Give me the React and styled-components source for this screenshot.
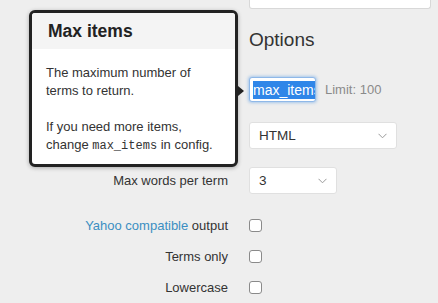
import React from "react";
import styled, { createGlobalStyle } from "styled-components";

const GlobalStyle = createGlobalStyle`
  body {
    margin: 0;
    background: #eeeeee;
    font-family: "Liberation Sans", Arial, sans-serif;
    color: #333;
  }
`;

const Page = styled.div`
  position: relative;
  width: 438px;
  height: 303px;
  overflow: hidden;
  padding-left: 8px;
  box-sizing: border-box;
`;

const Row = styled.div`
  display: grid;
  grid-template-columns: 220px 1fr;
  column-gap: 21px;
  align-items: center;
  margin-top: ${(p) => p.$mt || 0}px;
  min-height: ${(p) => p.$h || 0}px;
`;

const Label = styled.div`
  text-align: right;
  font-size: 13px;
  color: #333;
  white-space: nowrap;
`;

const Link = styled.span`
  color: #3b8ec2;
`;

const TextArea = styled.div`
  width: 180px;
  height: 8px;
  background: #fff;
  border: 1px solid #d8d8d8;
  border-top: none;
  border-radius: 0 0 3px 3px;
`;

const Heading = styled.h2`
  margin: 0;
  font-weight: normal;
  font-size: 19px;
  line-height: 22px;
  color: #333;
`;

const Controls = styled.div`
  display: flex;
  align-items: center;
  gap: 9px;
`;

const FakeInput = styled.div`
  width: 67px;
  height: 25px;
  box-sizing: border-box;
  background: #fff;
  border: 1px solid #8fb8e8;
  border-radius: 3px;
  box-shadow: 0 0 3px 1px rgba(80, 150, 230, 0.45);
  overflow: hidden;
  display: flex;
  align-items: center;
  padding-left: 3px;
  font-size: 14px;
  white-space: nowrap;
`;

const Selected = styled.span`
  background: #2f86e8;
  color: #fff;
  line-height: 18px;
`;

const Hint = styled.span`
  font-size: 13px;
  color: #8a8a8a;
`;

const Select = styled.div`
  width: ${(p) => p.$w}px;
  height: 27px;
  box-sizing: border-box;
  background: #fff;
  border: 1px solid #e0e0e0;
  border-radius: 3px;
  display: flex;
  align-items: center;
  justify-content: space-between;
  padding: 0 9px 0 9px;
  font-size: 13.5px;
  color: #333;
`;

const Check = styled.span`
  display: block;
  width: 13px;
  height: 13px;
  box-sizing: border-box;
  background: #fff;
  border: 1px solid #8a8a8a;
  border-radius: 3px;
`;

const Popover = styled.div`
  position: absolute;
  left: 29px;
  top: 10px;
  width: 209px;
  height: 157px;
  box-sizing: border-box;
  background: #fff;
  border: 3px solid #222;
  border-radius: 6px;
  box-shadow: 0 1px 4px rgba(0, 0, 0, 0.3);

  &::after {
    content: "";
    position: absolute;
    left: 100%;
    top: 73px;
    margin-left: 3px;
    border-left: 6px solid #222;
    border-top: 5px solid transparent;
    border-bottom: 5px solid transparent;
  }
`;

const PopHeader = styled.div`
  height: 36px;
  background: #f4f4f4;
  border-radius: 3px 3px 0 0;
  display: flex;
  align-items: center;
  padding-left: 16px;
  font-weight: bold;
  font-size: 17.5px;
  color: #222;
`;

const PopBody = styled.div`
  padding: 15px 14px 0 14px;
  font-size: 13px;
  line-height: 18px;
  color: #333;
`;

const Code = styled.code`
  font-family: "Liberation Mono", "DejaVu Sans Mono", monospace;
  font-size: 12px;
`;

const Chevron = () => (
  <svg width="9" height="6" viewBox="0 0 9 6">
    <path d="M0.5 0.8 L4.5 4.8 L8.5 0.8" fill="none" stroke="#999" strokeWidth="1" />
  </svg>
);

export default function App() {
  return (
    <>
      <GlobalStyle />
      <Page>
        <Row>
          <span />
          <TextArea />
        </Row>
        <Row $mt={20}>
          <span />
          <Heading>Options</Heading>
        </Row>
        <Row $mt={26}>
          <span />
          <Controls>
            <FakeInput>
              <Selected>max_items</Selected>
            </FakeInput>
            <Hint>Limit: 100</Hint>
          </Controls>
        </Row>
        <Row $mt={20}>
          <span />
          <Select $w={148}>
            HTML <Chevron />
          </Select>
        </Row>
        <Row $mt={18}>
          <Label>Max words per term</Label>
          <Select $w={88}>
            3 <Chevron />
          </Select>
        </Row>
        <Row $mt={16} $h={31}>
          <Label>
            <Link>Yahoo compatible</Link> output
          </Label>
          <Check />
        </Row>
        <Row $h={31}>
          <Label>Terms only</Label>
          <Check />
        </Row>
        <Row $h={31}>
          <Label>Lowercase</Label>
          <Check />
        </Row>

        <Popover>
          <PopHeader>Max items</PopHeader>
          <PopBody>
            The maximum number of
            <br />
            terms to return.
            <br />
            <br />
            If you need more items,
            <br />
            change <Code>max_items</Code> in config.
          </PopBody>
        </Popover>
      </Page>
    </>
  );
}
